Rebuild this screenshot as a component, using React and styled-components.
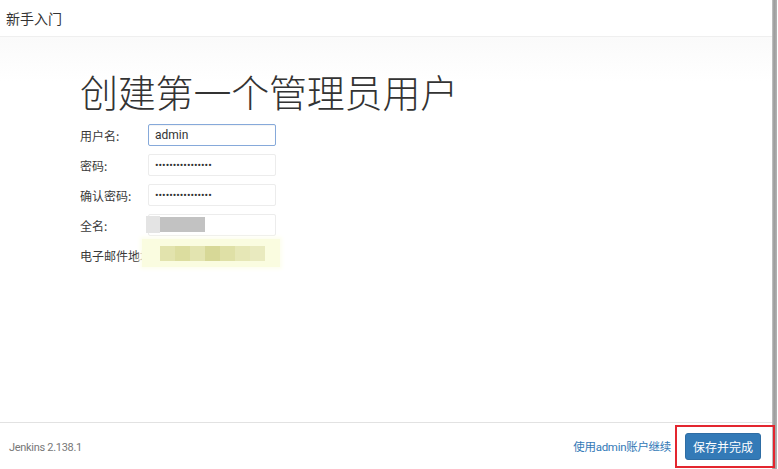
import React from "react";
import styled, { createGlobalStyle } from "styled-components";

const Global = createGlobalStyle`
  html, body { margin: 0; padding: 0; background: #fff; }
  body { font-family: Roboto, "Noto Sans CJK SC", sans-serif; color: #333; }
  * { box-sizing: border-box; }
`;

const Shell = styled.div`
  position: relative;
  width: 778px;
  height: 469px;
  display: flex;
  overflow: hidden;
  background: #fff;
`;

const Panel = styled.div`
  width: 772px;
  height: 100%;
  display: flex;
  flex-direction: column;
  background: #fff;
`;

const Edge = styled.div`
  width: 5px;
  height: 100%;
  background: linear-gradient(to right, #c8c8c8, #9a9a9a 40%, #b4b4b4);
`;

const Header = styled.div`
  height: 37px;
  flex: none;
  display: flex;
  align-items: center;
  padding-left: 6px;
  font-size: 14px;
  color: #333;
  border-bottom: 1px solid #efefef;
  font-family: "Noto Sans CJK SC", sans-serif;
`;

const Main = styled.div`
  flex: 1;
  padding: 31px 0 0 80px;
  background: linear-gradient(to bottom, #fafafa, #fff 45px);
`;

const Title = styled.h1`
  margin: 0;
  font-family: "Noto Sans CJK SC", sans-serif;
  font-weight: 300;
  font-size: 38px;
  line-height: 46px;
  color: #333;
  letter-spacing: -0.2px;
`;

const Form = styled.div`
  margin-top: 10px;
  display: flex;
  flex-direction: column;
  gap: 8px;
`;

const Row = styled.div`
  position: relative;
  display: flex;
  align-items: center;
  height: 22px;
`;

const Label = styled.label`
  width: 68px;
  font-size: 12px;
  color: #3a3a3a;
  font-family: "Noto Sans CJK SC", sans-serif;
  white-space: nowrap;
`;

const Input = styled.input`
  width: 128px;
  height: 22px;
  padding: 0 6px;
  border: 1px solid ${(p) => (p.$focused ? "#86a9da" : p.$bg ? "transparent" : "#ececec")};
  border-radius: 2px;
  background: ${(p) => p.$bg || "#fff"};
  font-family: Roboto, Arial, sans-serif;
  font-size: ${(p) => (p.type === "password" ? "10.5px" : "12px")};
  color: #333;
  outline: none;
  box-shadow: ${(p) => (p.$focused ? "inset 0 1px 1px rgba(0,0,0,0.05)" : "none")};
`;

const Mosaic = styled.div`
  position: absolute;
  left: ${(p) => p.$left}px;
  top: ${(p) => p.$top}px;
  width: ${(p) => p.$w}px;
  height: ${(p) => p.$h}px;
  display: flex;
  align-items: center;
  background: ${(p) => p.$bg || "transparent"};
  box-shadow: ${(p) => (p.$glow ? `0 0 4px 2px ${p.$glow}` : "none")};
`;

const Cell = styled.div`
  width: ${(p) => p.$w}px;
  height: ${(p) => p.$h}px;
  margin-left: ${(p) => p.$ml || 0}px;
  background: ${(p) => p.$c};
  flex: none;
`;

const Footer = styled.div`
  height: 47px;
  flex: none;
  border-top: 1px solid #e2e2e2;
  display: flex;
  align-items: center;
  padding: 0 11px 0 9px;
`;

const Version = styled.span`
  font-family: Roboto, sans-serif;
  font-size: 11px;
  color: #777;
  letter-spacing: -0.3px;
  padding-top: 2px;
`;

const Actions = styled.div`
  margin-left: auto;
  display: flex;
  align-items: center;
  gap: 14px;
`;

const Link = styled.a`
  font-size: 11.5px;
  letter-spacing: -0.3px;
  color: #337ab7;
  text-decoration: none;
  font-family: Roboto, "Noto Sans CJK SC", sans-serif;
  cursor: pointer;
`;

const Button = styled.button`
  width: 76px;
  height: 27px;
  border: 1px solid #2e6da4;
  border-radius: 3px;
  background: #337ab7;
  color: #fff;
  font-size: 12px;
  font-family: "Noto Sans CJK SC", sans-serif;
  padding: 0;
  cursor: pointer;
`;

const Highlight = styled.div`
  position: absolute;
  left: 675px;
  top: 425px;
  width: 100px;
  height: 43px;
  border: 2px solid #e3262f;
  pointer-events: none;
`;

const yellowCells = ["#e2e3ad", "#dcdd9f", "#e3e4b0", "#d7d897", "#dfe0a6", "#e6e7b6", "#e9eabf"];

export default function App() {
  return (
    <>
      <Global />
      <Shell>
        <Panel>
          <Header>新手入门</Header>
          <Main>
            <Title>创建第一个管理员用户</Title>
            <Form>
              <Row>
                <Label>用户名:</Label>
                <Input $focused defaultValue="admin" readOnly />
              </Row>
              <Row>
                <Label>密码:</Label>
                <Input type="password" defaultValue="aaaaaaaaaaaaaaaa" readOnly />
              </Row>
              <Row>
                <Label>确认密码:</Label>
                <Input type="password" defaultValue="aaaaaaaaaaaaaaaa" readOnly />
              </Row>
              <Row>
                <Label>全名:</Label>
                <Input defaultValue="" readOnly />
                <Mosaic $left={66} $top={2} $w={60} $h={17}>
                  <Cell $w={14} $h={17} $c="#e4e4e4" />
                  <Cell $w={45} $h={15} $c="#c2c2c2" />
                </Mosaic>
              </Row>
              <Row>
                <Label>电子邮件地址</Label>
                <Input $bg="#fbfde3" defaultValue="" readOnly />
                <Mosaic $left={62} $top={-5} $w={138} $h={28} $bg="#fafce0" $glow="#fdfeee">
                  {yellowCells.map((c, i) => (
                    <Cell key={i} $w={15} $h={15} $c={c} $ml={i === 0 ? 18 : 0} />
                  ))}
                </Mosaic>
              </Row>
            </Form>
          </Main>
          <Footer>
            <Version>Jenkins 2.138.1</Version>
            <Actions>
              <Link>使用admin账户继续</Link>
              <Button>保存并完成</Button>
            </Actions>
          </Footer>
        </Panel>
        <Edge />
        <Highlight />
      </Shell>
    </>
  );
}
